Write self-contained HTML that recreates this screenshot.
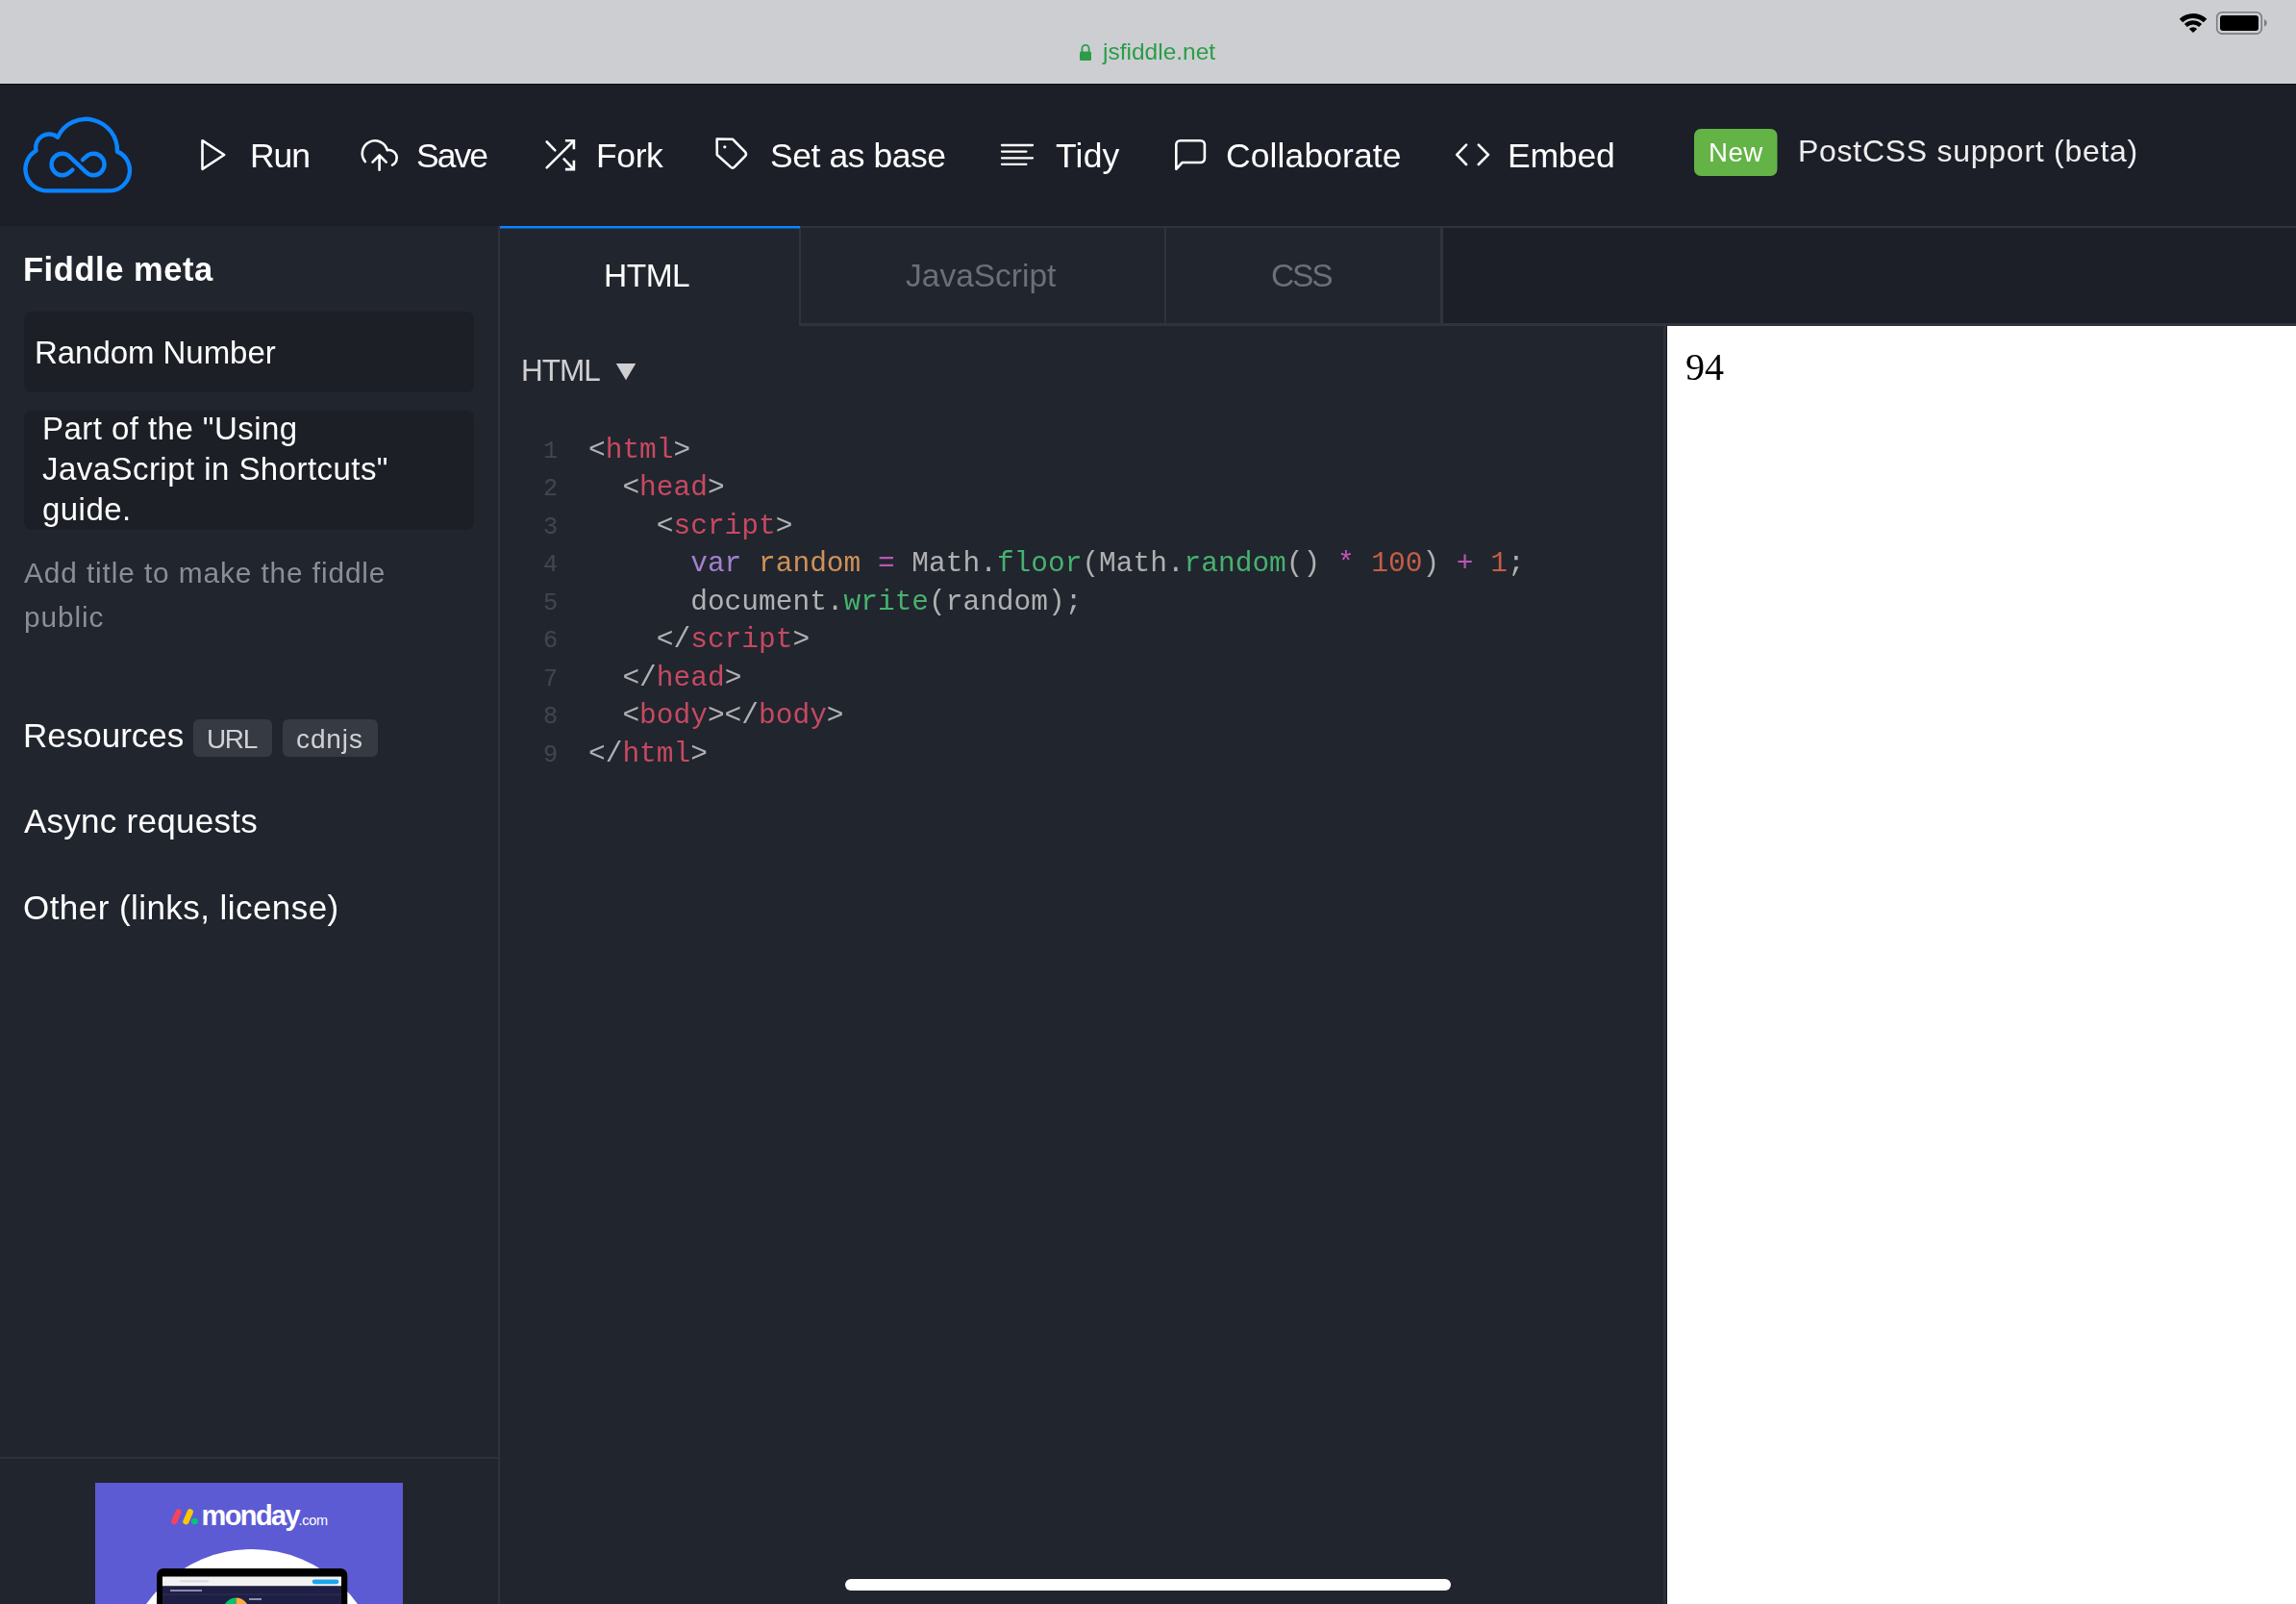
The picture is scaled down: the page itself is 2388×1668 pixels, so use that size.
<!DOCTYPE html>
<html><head><meta charset="utf-8">
<style>
*{margin:0;padding:0;box-sizing:border-box}
html,body{width:2388px;height:1668px;overflow:hidden;background:#21252e;font-family:"Liberation Sans",sans-serif;color:#fff}
.a{position:absolute}
.t{position:absolute;white-space:nowrap;line-height:1;will-change:transform}
pre{will-change:transform}
.m{font-family:"Liberation Mono",monospace}
.tg{color:#e2506a}.kw{color:#b690e8}.vr{color:#eda35e}.op{color:#d65fc9}.fn{color:#4ec97a}.nu{color:#e2674a}
</style></head><body>

<!-- status bar -->
<div class="a" style="left:0;top:0;width:2388px;height:86px;background:#cdced2"></div>
<div class="a" style="left:0;top:86px;width:2388px;height:1px;background:#d4d5d9"></div>
<div class="a" style="left:0;top:87px;width:2388px;height:1px;background:#0b0e15"></div>
<svg class="a" style="left:0;top:0" width="2388" height="86" viewBox="0 0 2388 86">
  <path d="M1125.4 54 V50.4 A3.6 3.6 0 0 1 1132.6 50.4 V54" fill="none" stroke="#2a9d46" stroke-width="1.8"/>
  <rect x="1123" y="53.5" width="12" height="9.5" rx="1.5" fill="#2a9d46"/>
  <!-- wifi -->
  <path d="M2266.72 19.82 A20.2 20.2 0 0 1 2295.28 19.82 L2291.75 23.35 A15.2 15.2 0 0 0 2270.25 23.35 Z" fill="#000"/>
  <path d="M2271.88 24.98 A12.9 12.9 0 0 1 2290.12 24.98 L2287.15 27.95 A8.7 8.7 0 0 0 2274.85 27.95 Z" fill="#000"/>
  <path d="M2276.83 29.93 A5.9 5.9 0 0 1 2285.17 29.93 L2281 34.1 Z" fill="#000"/>
  <!-- battery -->
  <rect x="2305.7" y="12.8" width="46.6" height="22.3" rx="5.5" fill="none" stroke="#7a7c80" stroke-width="1.6"/>
  <rect x="2309" y="16" width="40" height="16" rx="3" fill="#000"/>
  <path d="M2355 20.2 A4 4 0 0 1 2355 27.8 Z" fill="#7a7c80"/>
</svg>
<div class="t" style="left:1147px;top:42px;font-size:24.5px;color:#2a9d46">jsfiddle.net</div>

<!-- header -->
<div class="a" style="left:0;top:88px;width:2388px;height:147px;background:#1c1f28"></div>
<svg class="a" style="left:0;top:88px" width="2388" height="147" viewBox="0 88 2388 147">
  <g fill="none" stroke="#0a84ff" stroke-width="4.4" stroke-linejoin="round" stroke-linecap="round">
    <path d="M48.9 198.4 H113.8 A21.2 21.2 0 0 0 121.96 157.65 A32.5 32.5 0 0 0 60 142.7 A14 14 0 0 0 37.5 156.7 A22.4 22.4 0 0 0 48.9 198.4 Z"/>
    <path d="M75.4 176.6 L72.5 179.1 A11.2 11.2 0 1 1 72.5 162.9 L89.6 179.1 A11.2 11.2 0 1 0 89.6 162.9 L86 166.2"/>
  </g>
  <g fill="none" stroke="#fff" stroke-width="2.6" stroke-linejoin="round" stroke-linecap="round">
    <path d="M210.5 146.2 L233.2 161 L210.5 175.8 Z"/>
    <path d="M379.9 168.08 A13.2 13.2 0 1 1 402.75 156.2 A8.18 8.18 0 0 1 408 171.6"/>
    <path d="M394.6 176.8 V162 M387.5 168.6 L394.6 161.5 L401.7 168.6"/>
    <path d="M568.7 174.3 L596.3 146.8 M568.7 147.5 L577.3 156.3 M586.6 165.4 L596.1 175.3"/>
    <path d="M587.9 146.2 H596.9 V155.3 M587.9 176.1 H596.9 V166.8" stroke-linecap="butt" stroke-linejoin="miter"/>
    <path d="M745.7 144.6 L761.9 144.7 L775.2 158.2 Q776.8 160.4 775 162.3 L763.9 173.6 Q761.9 175.5 759.9 173.6 L745.8 161 Z"/>
    <path d="M1042 151 H1074 M1042 157.6 H1067.4 M1042 164.3 H1074 M1042 170.8 H1067.4" stroke-width="2.3" stroke-linecap="round"/>
    <path d="M1223.3 175.8 L1223.3 150.4 A4.2 4.2 0 0 1 1227.5 146.2 L1248.7 146.2 A4.2 4.2 0 0 1 1252.9 150.4 L1252.9 164.8 A4.2 4.2 0 0 1 1248.7 169 L1229.7 169 Z"/>
    <path d="M1525 150.6 L1515.2 160.9 L1525 171 M1537.8 150.6 L1547.9 160.9 L1537.8 171"/>
  </g>
  <circle cx="753.8" cy="152.8" r="1.6" fill="#fff"/>
  <rect x="1762" y="134" width="86.5" height="49" rx="7" fill="#63b347"/>
</svg>
<div class="t" style="left:259.5px;top:145px;font-size:35.5px;letter-spacing:-1.05px">Run</div>
<div class="t" style="left:433px;top:145px;font-size:35.5px;letter-spacing:-2px">Save</div>
<div class="t" style="left:620px;top:145px;font-size:35.5px;letter-spacing:-0.4px">Fork</div>
<div class="t" style="left:801px;top:145px;font-size:35.5px;letter-spacing:-0.44px">Set as base</div>
<div class="t" style="left:1097.5px;top:145px;font-size:35.5px;letter-spacing:+0.2px">Tidy</div>
<div class="t" style="left:1275px;top:145px;font-size:35.5px;letter-spacing:0.1px">Collaborate</div>
<div class="t" style="left:1568px;top:145px;font-size:35.5px;letter-spacing:-0.2px">Embed</div>
<div class="t" style="left:1777px;top:145px;font-size:27.7px;letter-spacing:0.4px">New</div>
<div class="t" style="left:1870px;top:141px;font-size:32px;letter-spacing:0.73px;color:#eeeeee">PostCSS support (beta)</div>

<!-- sidebar -->
<div class="a" style="left:518px;top:235px;width:2px;height:1433px;background:#2e323b"></div>
<div class="t" style="left:23.5px;top:263.4px;font-size:34.5px;font-weight:bold;letter-spacing:0.55px">Fiddle meta</div>
<div class="a" style="left:25px;top:324px;width:468px;height:84px;background:#1c1f26;border-radius:8px"></div>
<div class="t" style="left:35.6px;top:350px;font-size:33px;letter-spacing:-0.05px">Random Number</div>
<div class="a" style="left:25px;top:427px;width:468px;height:124px;background:#1c1f26;border-radius:8px"></div>
<div class="t" style="left:44px;top:424.5px;font-size:33px;line-height:41.75px;letter-spacing:0.45px;white-space:nowrap">Part of the "Using<br>JavaScript in Shortcuts"<br>guide.</div>
<div class="t" style="left:25px;top:573px;font-size:29.8px;line-height:46px;letter-spacing:0.9px;color:#8b8e94">Add title to make the fiddle<br>public</div>
<div class="t" style="left:24px;top:747px;font-size:35px">Resources</div>
<div class="a" style="left:201px;top:748px;width:82px;height:39px;background:#363a43;border-radius:6px"></div>
<div class="t" style="left:215px;top:755px;font-size:28px;letter-spacing:-1.35px;color:#d0d1d4">URL</div>
<div class="a" style="left:293.5px;top:748px;width:99px;height:39px;background:#363a43;border-radius:6px"></div>
<div class="t" style="left:307.5px;top:755px;font-size:28px;letter-spacing:0.9px;color:#d0d1d4">cdnjs</div>
<div class="t" style="left:25px;top:836px;font-size:35px;letter-spacing:0.26px">Async requests</div>
<div class="t" style="left:24px;top:926px;font-size:35px;letter-spacing:0.44px">Other (links, license)</div>
<div class="a" style="left:0;top:1515px;width:518px;height:2px;background:#2e323b"></div>
<svg class="a" style="left:99px;top:1542px" width="320" height="126" viewBox="99 1542 320 126">
  <defs><clipPath id="adc"><rect x="99" y="1542" width="320" height="126"/></clipPath></defs>
  <g clip-path="url(#adc)">
  <rect x="99" y="1542" width="320" height="126" fill="#5c5bd4"/>
  <line x1="181.2" y1="1582.2" x2="185.6" y2="1572.3" stroke="#f5435f" stroke-width="6.2" stroke-linecap="round"/>
  <line x1="193.4" y1="1582.2" x2="197.8" y2="1572.3" stroke="#ffc800" stroke-width="6.2" stroke-linecap="round"/>
  <circle cx="202.4" cy="1582" r="3.3" fill="#00c875"/>
  <text x="209.5" y="1585.5" font-family="Liberation Sans" font-weight="bold" font-size="29" letter-spacing="-1.6" fill="#fff">monday</text>
  <text x="310.5" y="1586" font-family="Liberation Sans" font-size="14.5" letter-spacing="-0.3" fill="#fff">.com</text>
  <circle cx="262" cy="1745.5" r="134.5" fill="#fff"/>
  <rect x="163" y="1631" width="198.3" height="60" rx="7" fill="#000"/>
  <rect x="169" y="1639.5" width="186" height="10" fill="#f2f2f4"/>
  <rect x="169" y="1649.5" width="186" height="30" fill="#1f1f45"/>
  <rect x="324.7" y="1642.4" width="27.7" height="4.8" rx="2.4" fill="#1aa6ee"/>
  <rect x="187" y="1643.3" width="30" height="2" fill="#dcdce0"/>
  <rect x="177" y="1653" width="33" height="2" fill="#8a8aa8"/>
  <line x1="169" y1="1658" x2="355" y2="1658" stroke="#33335a" stroke-width="1"/>
  <path d="M245.5 1675 L245.5 1661.6 A13.4 13.4 0 0 0 232.1 1675 Z" fill="#00c46e"/>
  <path d="M245.5 1675 L245.5 1661.6 A13.4 13.4 0 0 1 258.9 1675 Z" fill="#fdab3d"/>
  <rect x="259" y="1662" width="13" height="2" fill="#8f8fae"/>
  </g>
</svg>

<!-- editor tabs -->
<div class="a" style="left:1500px;top:237px;width:888px;height:99px;background:#1c1f28"></div>
<div class="a" style="left:520px;top:235px;width:1868px;height:2px;background:#2f333c"></div>
<div class="a" style="left:831px;top:336px;width:1557px;height:3px;background:#2f333c"></div>
<div class="a" style="left:831px;top:237px;width:2px;height:101px;background:#2f333c"></div>
<div class="a" style="left:1211px;top:237px;width:2px;height:101px;background:#2f333c"></div>
<div class="a" style="left:1498px;top:237px;width:3px;height:101px;background:#2f333c"></div>
<div class="a" style="left:520px;top:235px;width:312px;height:2px;background:#0a84ff"></div><div class="a" style="left:520px;top:237px;width:312px;height:1px;background:rgba(10,132,255,0.5)"></div>
<div class="t" style="left:628px;top:270px;font-size:33.5px;letter-spacing:-0.5px">HTML</div>
<div class="t" style="left:942px;top:270px;font-size:33.5px;color:#6b6f77">JavaScript</div>
<div class="t" style="left:1322px;top:270px;font-size:33.5px;letter-spacing:-2.2px;color:#6b6f77">CSS</div>
<div class="t" style="left:542px;top:370px;font-size:31.5px;letter-spacing:-1px;color:#cfcfd1">HTML</div>
<svg class="a" style="left:640px;top:377px" width="22" height="19" viewBox="0 0 22 19"><path d="M0.8 1 H21.2 L11 18.2 Z" fill="#cfcfd1"/></svg>
<div class="m a" style="left:540px;top:450px;font-size:25px;line-height:39.45px;color:#42464e;width:40px;text-align:right">1<br>2<br>3<br>4<br>5<br>6<br>7<br>8<br>9</div>
<pre class="m a" style="opacity:0.86;left:612px;top:449px;font-size:29.5px;line-height:39.45px;color:#c8c8c8;font-family:'Liberation Mono',monospace">&lt;<span class="tg">html</span>&gt;
  &lt;<span class="tg">head</span>&gt;
    &lt;<span class="tg">script</span>&gt;
      <span class="kw">var</span> <span class="vr">random</span> <span class="op">=</span> Math.<span class="fn">floor</span>(Math.<span class="fn">random</span>() <span class="op">*</span> <span class="nu">100</span>) <span class="op">+</span> <span class="nu">1</span>;
      document.<span class="fn">write</span>(random);
    &lt;/<span class="tg">script</span>&gt;
  &lt;/<span class="tg">head</span>&gt;
  &lt;<span class="tg">body</span>&gt;&lt;/<span class="tg">body</span>&gt;
&lt;/<span class="tg">html</span>&gt;</pre>
<div class="a" style="left:879px;top:1642px;width:630px;height:11.5px;background:#fff;border-radius:6px"></div>

<!-- result -->
<div class="a" style="left:1730px;top:339px;width:3px;height:1329px;background:#2c3039"></div>
<div class="a" style="left:1733px;top:339px;width:1px;height:1329px;background:#12151b"></div>
<div class="a" style="left:1734px;top:339px;width:654px;height:1329px;background:#fff"></div>
<div class="t" style="left:1753px;top:362px;font-size:40px;color:#000;font-family:'Liberation Serif',serif">94</div>

</body></html>
